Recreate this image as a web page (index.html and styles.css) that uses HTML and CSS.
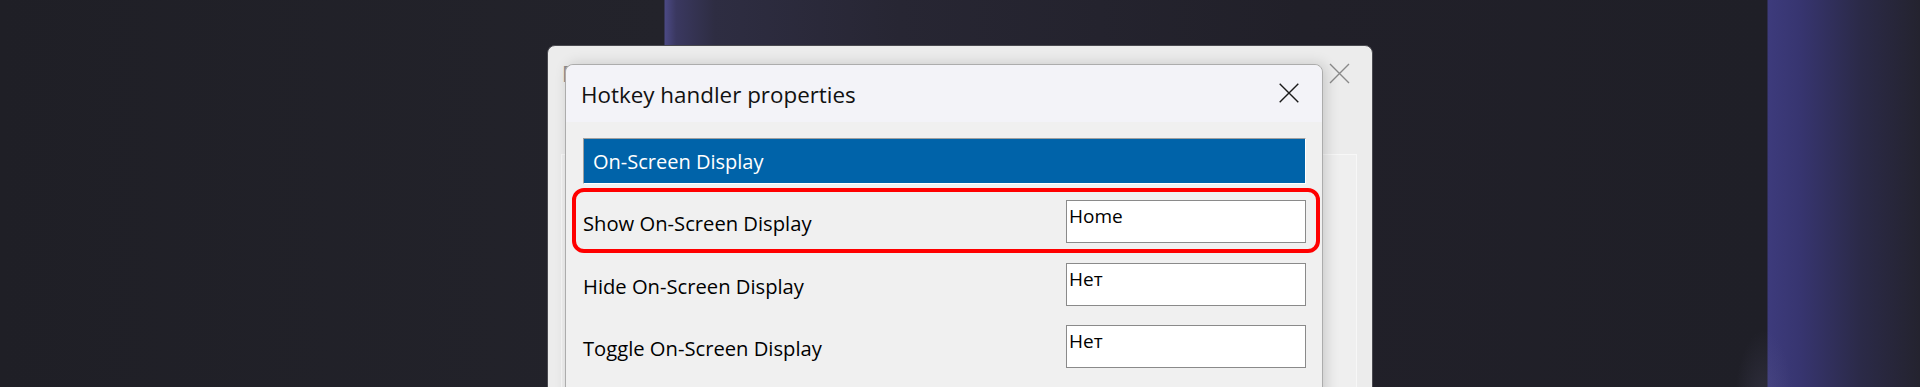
FILE: index.html
```html
<!DOCTYPE html>
<html lang="en">
<head>
  <meta charset="UTF-8">
  <meta name="viewport" content="width=device-width, initial-scale=1.0">
  <title>Hotkey handler properties</title>
  <link rel="stylesheet" href="styles.css">
</head>
<body>
  <div class="desktop">
    <!-- Parent window (its title is mostly hidden behind the dialog) -->
    <div class="window">
      <div class="window-titlebar">
        <div class="window-title">R</div>
        <svg class="window-close" width="21" height="21" viewBox="0 0 21 21">
          <path d="M1 1 L20 20 M20 1 L1 20" stroke="#8a8a8a" stroke-width="1.4" fill="none"/>
        </svg>
      </div>
      <div class="window-panel"></div>

      <!-- Hotkey dialog -->
      <div class="dialog">
        <div class="dialog-titlebar">
          <div class="dialog-title">Hotkey handler properties</div>
          <svg class="dialog-close" width="20" height="20" viewBox="0 0 20 20">
            <path d="M0.7 0.7 L19.3 19.3 M19.3 0.7 L0.7 19.3" stroke="#1a1a1a" stroke-width="1.4" fill="none"/>
          </svg>
        </div>

        <div class="dialog-body">
          <div class="group-header">On-Screen Display</div>

          <div class="rows">
            <div class="row">
              <div class="highlight"></div>
              <div class="row-label">Show On-Screen Display</div>
              <div class="hotkey-field">Home</div>
            </div>
            <div class="row">
              <div class="row-label">Hide On-Screen Display</div>
              <div class="hotkey-field">Нет</div>
            </div>
            <div class="row">
              <div class="row-label">Toggle On-Screen Display</div>
              <div class="hotkey-field">Нет</div>
            </div>
          </div>
        </div>
      </div>
    </div>
  </div>
</body>
</html>
```

FILE: styles.css
```css
/* Global */
body {
  margin: 0;
  height: 387px;
  overflow: hidden;
  font-family: "Open Sans", "Noto Sans", sans-serif;
  background: #1f1f26;
}

/* Desktop wallpaper */
.desktop {
  position: relative;
  width: 1920px;
  height: 387px;
  background:
    radial-gradient(ellipse 30px 80px at 1764px 410px, rgba(110, 108, 150, 0.22), rgba(110, 108, 150, 0) 100%),
    linear-gradient(90deg,
      #1f1f26 0,
      #23232b 664px,
      #4b4984 665px,
      #3a3860 676px,
      #2e2d42 715px,
      #272633 900px,
      #212029 1300px,
      #1f1f27 1767px,
      #3d3b7c 1768px,
      #373570 1800px,
      #2b2a48 1860px,
      #24232f 1920px);
}

/* Parent window */
.window {
  position: absolute;
  left: 547px;
  top: 45px;
  width: 824px;
  height: 380px;
  background: #ececec;
  border: 1px solid #4a4a50;
  border-radius: 8px 8px 0 0;
}

.window-titlebar {
  display: flex;
  justify-content: space-between;
  align-items: flex-start;
  height: 108px;
  padding: 15px 22px 0 14px;
  box-sizing: border-box;
}

.window-title {
  font-size: 21px;
  line-height: 26px;
  color: #8c8c8c;
}

.window-close {
  margin-top: 2px;
}

.window-panel {
  margin: 0 15px 0 13px;
  height: 280px;
  background: #efefef;
  border: 1px solid #f7f7f7;
}

/* Dialog */
.dialog {
  position: absolute;
  left: 17px;
  top: 18px;
  width: 756px;
  height: 360px;
  background: #f0f0f0;
  border: 1px solid #acacac;
  border-radius: 8px 8px 0 0;
  box-shadow: 3px 0 14px rgba(0, 0, 0, 0.16);
}

.dialog-titlebar {
  display: flex;
  justify-content: space-between;
  align-items: flex-start;
  height: 57px;
  padding: 15px 23px 0 15px;
  box-sizing: border-box;
  background: #f3f3f8;
  border-radius: 8px 8px 0 0;
}

.dialog-title {
  font-size: 22.4px;
  line-height: 30px;
  color: #111;
}

.dialog-close {
  margin-top: 3px;
}

.dialog-body {
  padding: 16px 16px 0 17px;
}

.group-header {
  height: 46px;
  box-sizing: border-box;
  padding: 2px 0 0 9px;
  line-height: 42px;
  font-size: 20px;
  color: #fff;
  background: #0063a9;
  border: 1px solid #fff;
  border-top-color: #a0a0a0;
  border-left-color: #a0a0a0;
}

/* Hotkey rows */
.rows {
  margin-top: 6px;
}

.row {
  position: relative;
  display: flex;
  align-items: flex-start;
  height: 62.5px;
}

.row-label {
  flex: 1;
  margin-top: 19px;
  font-size: 20.2px;
  line-height: 28px;
  color: #000;
}

.hotkey-field {
  width: 240px;
  height: 43px;
  margin-top: 10px;
  box-sizing: border-box;
  padding: 3px 0 0 2px;
  font-size: 19px;
  line-height: 24px;
  color: #000;
  background: #fff;
  border: 1px solid #8a8a8a;
}

/* Red annotation frame */
.highlight {
  position: absolute;
  top: -2px;
  left: -11px;
  right: -14px;
  bottom: 0;
  border: 4px solid #ff0000;
  border-radius: 12px;
}
```
